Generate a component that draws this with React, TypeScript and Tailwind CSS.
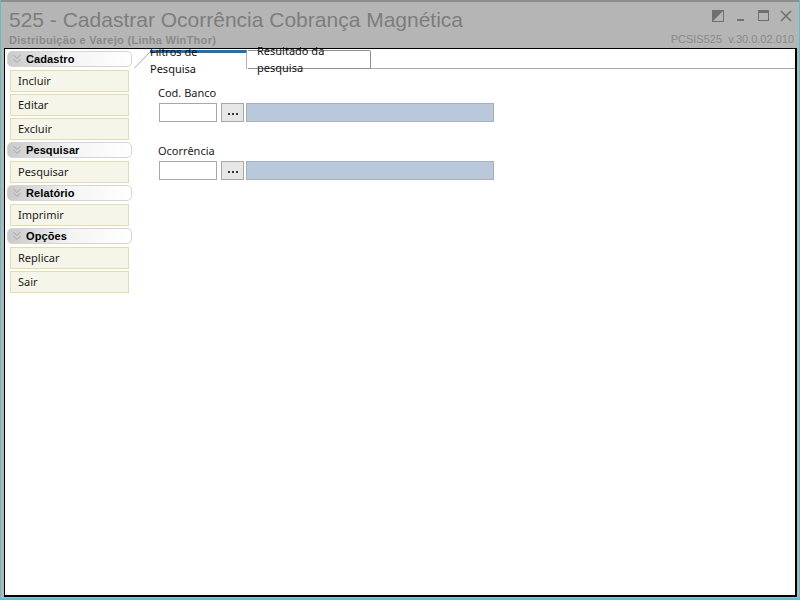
import React from "react";

const Tahoma = "[font-family:'Noto_Sans','Liberation_Sans',sans-serif]";

function Header({ label }: { label: string }) {
  return (
    <div className="h-[16px] w-[125px] flex items-center rounded-[5px] border border-[#d4d4d4] bg-gradient-to-r from-[#c9c9c9] via-[#f4f4f4] to-white">
      <svg width="12" height="12" viewBox="0 0 12 12" className="ml-[3px] mr-[3px]" fill="none" stroke="#a3a3a3" strokeWidth="1">
        <path d="M2.5 2 L6 5.5 L9.5 2 M2.5 6 L6 9.5 L9.5 6" />
      </svg>
      <span className="text-[11px] font-bold text-black leading-none tracking-[0.1px] [font-family:'Liberation_Sans',sans-serif]">{label}</span>
    </div>
  );
}

function Item({ label }: { label: string }) {
  return (
    <div className="ml-[3px] h-[22px] w-[119px] flex items-center pl-[7px] border border-[#e3dcae] bg-[#f6f5e9] text-[11px] text-[#1a1a1a]">
      {label}
    </div>
  );
}

function Field({ label }: { label: string }) {
  return (
    <div className="flex flex-col">
      <div className="text-[11px] leading-[14px] h-[14px] text-[#222] ml-[-1px]">{label}</div>
      <div className="mt-[3px] flex">
        <div className="w-[58px] h-[19px] bg-white border border-[#a8a8a8]" />
        <div className="ml-[4px] w-[23px] h-[19px] bg-[#e6e6e6] border border-[#a8a8a8] flex items-center justify-center gap-[2px] pt-[3px]">
          <i className="w-[2px] h-[2px] bg-[#333] block" />
          <i className="w-[2px] h-[2px] bg-[#333] block" />
          <i className="w-[2px] h-[2px] bg-[#333] block" />
        </div>
        <div className="ml-[2px] w-[248px] h-[19px] bg-[#b9c8db] border border-[#a8b0ba]" />
      </div>
    </div>
  );
}

export default function App() {
  return (
    <div className={`w-[800px] h-[600px] overflow-hidden bg-[#b5b5b5] border-x border-b-2 border-[#5cc0cc] border-t-0 flex flex-col ${Tahoma}`}>
      <div className="h-[2px] bg-[#8c8c8c] -mx-px shrink-0" />
      <div className="h-[46px] shrink-0 flex justify-between pl-[8px] pr-[5px]">
        <div className="flex flex-col">
          <div className="mt-[6px] text-[21px] leading-[24px] text-[#7d7d7d] [font-family:'Liberation_Sans',sans-serif]">
            525 - Cadastrar Ocorrência Cobrança Magnética
          </div>
          <div className="mt-[1px] text-[11px] leading-[14px] font-bold text-[#8a8a8a] tracking-[0.3px] [font-family:'Liberation_Sans',sans-serif]">
            Distribuição e Varejo (Linha WinThor)
          </div>
        </div>
        <div className="flex flex-col items-end">
          <div className="mt-[7px] flex items-center gap-[10px] h-[14px] mr-[2px]">
            <svg width="12" height="12" viewBox="0 0 12 12">
              <rect x="0.5" y="0.5" width="11" height="11" fill="#b5b5b5" stroke="#707070" />
              <path d="M0 0 H12 L0 12 Z" fill="#707070" />
            </svg>
            <svg width="12" height="12" viewBox="0 0 12 12" className="ml-[1px]">
              <rect x="2" y="9" width="7" height="2" fill="#707070" />
            </svg>
            <svg width="13" height="12" viewBox="0 0 13 12" fill="none" stroke="#707070">
              <rect x="1.5" y="0.5" width="10" height="10" />
              <path d="M1 2 H12" strokeWidth="2" />
            </svg>
            <svg width="12" height="12" viewBox="0 0 12 12" fill="none" stroke="#707070" strokeWidth="1.6">
              <path d="M1 1 L11 11 M11 1 L1 11" />
            </svg>
          </div>
          <div className="mt-[10px] text-[11px] leading-[13px] text-[#8a8a8a] [font-family:'Liberation_Sans',sans-serif]">
            PCSIS525&nbsp;&nbsp;v.30.0.02.010
          </div>
        </div>
      </div>
      <div className="ml-[3px] mr-[2px] flex-1 min-h-0 mb-[1px] bg-white border-2 border-black border-t border-l border-b-2 flex">
        <div className="w-[129px] shrink-0 pl-[2px] pt-[2px] flex flex-col gap-[2px]">
          <Header label="Cadastro" />
          <div className="flex flex-col gap-[2px] mt-[1px]">
            <Item label="Incluir" />
            <Item label="Editar" />
            <Item label="Excluir" />
          </div>
          <Header label="Pesquisar" />
          <div className="mt-[1px]"><Item label="Pesquisar" /></div>
          <Header label="Relatório" />
          <div className="mt-[1px]"><Item label="Imprimir" /></div>
          <Header label="Opções" />
          <div className="flex flex-col gap-[2px] mt-[1px]">
            <Item label="Replicar" />
            <Item label="Sair" />
          </div>
        </div>
        <div className="flex-1 flex flex-col min-w-0">
          <div className="h-[20px] shrink-0 flex items-end relative">
            <svg width="16" height="18" viewBox="0 0 16 18" className="shrink-0" fill="none" stroke="#a9a9a9">
              <path d="M0 17.5 L16 1" />
            </svg>
            <div className="h-[19px] w-[97px] border-t-[3px] border-[#1f6fb5] border-r border-r-[#b0b0b0] flex items-center justify-center text-[11px] text-[#111] pb-[1px]">
              Filtros de Pesquisa
            </div>
            <div className="ml-[1px] h-[19px] w-[123px] relative border-t border-r border-b border-[#8f8f8f] rounded-tr-[2px] bg-white flex items-center pl-[9px] text-[11px] text-[#111]">
              Resultado da pesquisa
            </div>
            <div className="flex-1 h-[1px] bg-[#a9a9a9]" />
          </div>
          <div className="pl-[25px] pt-[17px] flex flex-col gap-[22px]">
            <Field label="Cod. Banco" />
            <Field label="Ocorrência" />
          </div>
        </div>
      </div>
    </div>
  );
}
